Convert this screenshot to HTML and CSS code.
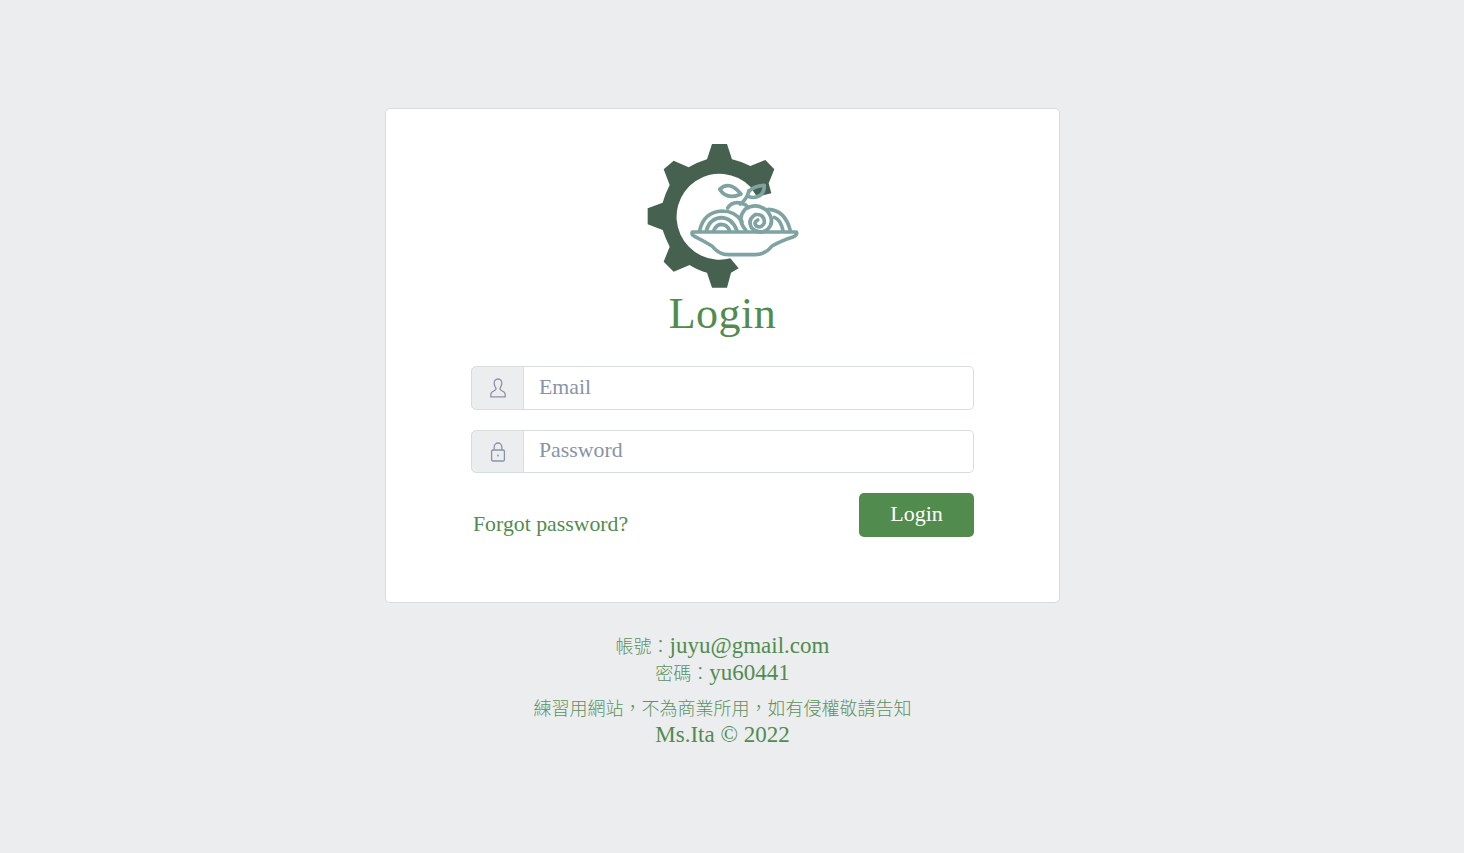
FILE: index.html
```html
<!DOCTYPE html>
<html lang="zh-Hant">
<head>
<meta charset="UTF-8" />
<meta name="viewport" content="width=device-width, initial-scale=1" />
<title>Login</title>
<link rel="stylesheet" href="styles.css">
</head>
<body>

<main class="login-page">

  <div class="login-card">
    <svg class="logo" viewBox="50 42 456 432" aria-hidden="true">
      <path class="logo-gear" d="M245 42 L290 42 L305 88 Q335 95 360 108 L405 90 L432 118 L415 160 L423 190 L380 200 L360 170 A129 129 0 1 0 300 385 L325 415 L302 428 L290 473 L245 473 L230 428 Q200 420 178 405 L130 425 L100 395 L118 350 Q105 325 97 300 L52 283 L52 235 L97 218 Q105 190 118 165 L100 118 L130 92 L175 112 Q200 97 230 88 Z"/>
      <g class="logo-bowl">
        <path d="M186 306 H498 Q502 314 490 320 Q452 332 425 348 Q405 374 375 374 H295 Q265 374 245 348 Q218 332 194 320 Q182 314 186 306 Z"/>
        <path d="M208 302 Q220 246 275 243 Q315 243 335 275"/>
        <path d="M228 302 Q238 266 272 263 Q305 263 320 302"/>
        <path d="M250 302 Q258 284 272 283 Q290 283 298 302"/>
        <path d="M346 300 Q318 268 344 238 Q378 216 410 242 Q436 274 412 298 Q388 316 364 294 Q350 270 374 254 Q402 250 402 278 Q394 296 378 288 Q368 278 382 270"/>
        <path d="M414 238 Q464 240 480 302"/>
        <path d="M432 262 Q452 270 458 302"/>
        <path d="M292 234 Q306 212 334 220 Q348 224 354 232"/>
        <path d="M330 222 Q350 208 356 182"/>
        <path d="M268 178 Q296 150 332 192 Q290 212 268 178 Z"/>
        <path d="M356 184 Q370 168 402 166 Q402 190 386 198 Q368 206 356 200"/>
      </g>
    </svg>
    <h1 class="login-title">Login</h1>

    <form class="login-form">
      <div class="input-group">
        <span class="input-icon">
          <svg viewBox="0 0 16 20" aria-hidden="true">
            <path d="M8 1 C5.2 1 4 3.2 4.2 5.8 C4.4 8 5.3 9.2 6 10.2 C6.2 11.6 5.4 12.4 3.8 13 C1.8 13.8 0.8 14.8 0.8 16.6 V18.8 H15.2 V16.6 C15.2 14.8 14.2 13.8 12.2 13 C10.6 12.4 9.8 11.6 10 10.2 C10.7 9.2 11.6 8 11.8 5.8 C12 3.2 10.8 1 8 1 Z"/>
          </svg>
        </span>
        <input class="input-field" type="email" placeholder="Email" />
      </div>
      <div class="input-group input-group-short">
        <span class="input-icon">
          <svg viewBox="0 0 16 20" aria-hidden="true">
            <rect x="1.6" y="8" width="12.8" height="11" rx="1.2"/>
            <path d="M4.2 8 V5 C4.2 2.7 5.9 1 8 1 C10.1 1 11.8 2.7 11.8 5 V8"/>
            <circle class="lock-dot" cx="8" cy="13.5" r="0.9"/>
          </svg>
        </span>
        <input class="input-field" type="password" placeholder="Password" />
      </div>
      <div class="form-actions">
        <a class="forgot-link" href="#">Forgot password?</a>
        <button class="login-btn" type="submit">Login</button>
      </div>
    </form>
  </div>

  <div class="login-notes">
    <p><span class="notes-cjk">帳號：</span>juyu@gmail.com</p>
    <p><span class="notes-cjk">密碼：</span>yu60441</p>
    <p class="notes-gap"><span class="notes-cjk">練習用網站，不為商業所用，如有侵權敬請告知</span></p>
    <p>Ms.Ita © 2022</p>
  </div>

</main>

</body>
</html>
```

FILE: styles.css
```css
* { box-sizing: border-box; }
body { margin: 0; min-height: 853px; padding-right: 19px; background: #ebedef; color: #528b4e; font-family: "Liberation Serif", "Noto Sans CJK TC", serif; }
.login-page { width: 675px; margin: 0 auto; padding-top: 108px; }

.login-card { height: 495px; padding: 35px 85px 0; background: #fff; border: 1px solid #d8dbe0; border-radius: 5px; display: flex; flex-direction: column; align-items: center; }
.logo { display: block; width: 152px; height: 144px; flex: none; }
.logo-gear { fill: #466150; }
.logo-bowl path { fill: none; stroke: #7fa3a3; stroke-width: 11; stroke-linecap: round; stroke-linejoin: round; }
.logo-bowl path:first-child { fill: #fff; }
.login-title { margin: 0; font-size: 44px; line-height: 52px; font-weight: 400; letter-spacing: 0.5px; }

.login-form { width: 503px; margin-top: 26px; }
.input-group { display: flex; height: 44px; margin-bottom: 20px; }
.input-group-short { height: 43px; }
.input-icon { width: 53px; flex: none; display: flex; align-items: center; justify-content: center; background: #ebedef; border: 1px solid #d8dbe0; border-radius: 5px 0 0 5px; }
.input-icon svg { width: 16px; height: 20px; fill: none; stroke: #8a93a6; stroke-width: 1.3; }
.input-icon .lock-dot { fill: #8a93a6; stroke: none; }
.input-field { flex: 1; min-width: 0; padding: 0 15px 2px; border: 1px solid #d8dbe0; border-left: 0; border-radius: 0 5px 5px 0; background: #fff; font-family: inherit; font-size: 21.8px; color: #333; outline: none; }
.input-field::placeholder { color: #8a93a6; opacity: 1; }

.form-actions { display: flex; justify-content: space-between; align-items: flex-start; }
.forgot-link { margin: 17px 0 0 2px; font-size: 21.8px; line-height: 28px; color: #528b4e; text-decoration: none; }
.login-btn { width: 115px; height: 44px; padding: 0 0 3px; background: #518b4d; color: #fff; border: none; border-radius: 5px; font-family: inherit; font-size: 22px; cursor: pointer; }

.login-notes { margin-top: 29px; text-align: center; font-size: 23px; line-height: 27px; }
.login-notes p { margin: 0; height: 27px; }
.login-notes .notes-gap { margin-top: 8px; }
.notes-cjk { font-size: 18px; font-weight: 300; line-height: 1; color: #5c9160; }
```
